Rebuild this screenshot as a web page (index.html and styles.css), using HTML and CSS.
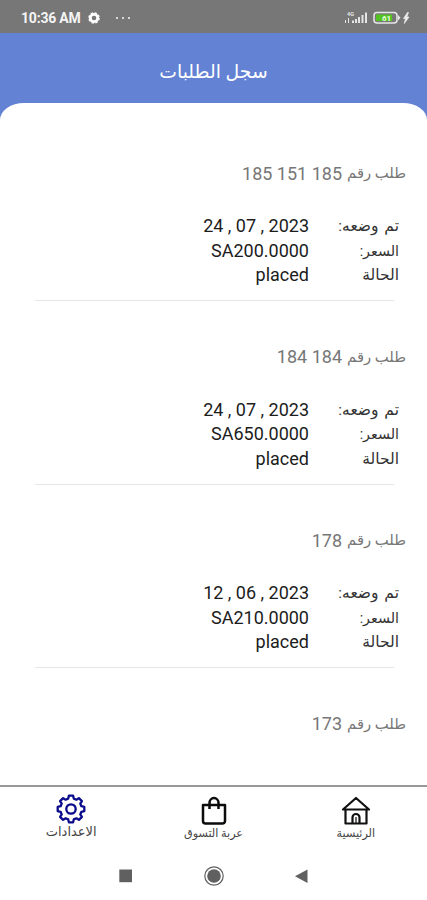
FILE: index.html
```html
<!DOCTYPE html>
<html lang="ar" dir="rtl">
<head>
<meta charset="utf-8">
<title>سجل الطلبات</title>
<link rel="stylesheet" href="styles.css">
</head>
<body>
<div class="status" dir="ltr">
  <span class="clock">10:36 AM</span>
  <svg class="status-gear" viewBox="0 0 12 12"><circle cx="6" cy="6" r="3.7" fill="none" stroke="#fff" stroke-width="2.8"/><circle cx="6" cy="6" r="5.1" fill="none" stroke="#fff" stroke-width="1.4" stroke-dasharray="2.4 1.6"/></svg>
  <svg class="dots" viewBox="0 0 16 4" fill="#eee"><circle cx="2" cy="2" r="1.100"/><circle cx="8" cy="2" r="1.100"/><circle cx="14" cy="2" r="1.100"/></svg>
  <svg class="indicators" viewBox="0 0 68 16">
    <text x="2" y="6" class="net">4G</text>
    <g fill="#e5e5e5"><path d="M0 10h1v3H0zM3 8h1v5H3zM7 10.500h2V13H7zM10 9h2v4h-2zM13 7h2v6h-2zM16.500 5h2v8h-2zM20 2.500h2V13h-2z"/></g>
    <rect x="29" y="2.500" width="23" height="10.500" rx="3" fill="#777" stroke="#e8e8e8" stroke-width="1.500"/>
    <path d="M53 5l2.500 2.700L53 10.500z" fill="#e8e8e8"/>
    <rect x="31" y="4.500" width="16" height="6.500" fill="#55c322"/>
    <text x="37" y="10.800" class="charge">61</text>
    <path d="M62.500 2.500l-4 6h2l-1.200 5 4.700-6.500h-2.200l1.700-4.500z" fill="#eee" stroke="#eee" stroke-width=".7"/>
  </svg>
</div>
<header><h1>سجل الطلبات</h1></header>
<main>
  <section class="order">
    <h2><span>طلب رقم</span> <b>185 151 185</b></h2>
    <dl>
      <dt>تم وضعه:</dt><dd>24 , 07 , 2023</dd>
      <dt class="price">السعر:</dt><dd>SA200.0000</dd>
      <dt>الحالة</dt><dd>placed</dd>
    </dl>
  </section>
  <section class="order">
    <h2><span>طلب رقم</span> <b>184 184</b></h2>
    <dl>
      <dt>تم وضعه:</dt><dd>24 , 07 , 2023</dd>
      <dt class="price">السعر:</dt><dd>SA650.0000</dd>
      <dt>الحالة</dt><dd>placed</dd>
    </dl>
  </section>
  <section class="order">
    <h2><span>طلب رقم</span> <b>178</b></h2>
    <dl>
      <dt>تم وضعه:</dt><dd>12 , 06 , 2023</dd>
      <dt class="price">السعر:</dt><dd>SA210.0000</dd>
      <dt>الحالة</dt><dd>placed</dd>
    </dl>
  </section>
  <section class="order">
    <h2><span>طلب رقم</span> <b>173</b></h2>
  </section>
</main>
<nav class="tabs">
  <a class="tab">
    <svg viewBox="0 0 30 30" fill="none" stroke="#111" stroke-width="2.200" stroke-linejoin="round"><path d="M2 13.500L15 2l13 11.500zM4.500 14v13.500h21V14M11.500 27v-5.500a3.500 3.500 0 0 1 7 0V27"/><path d="M15 21v6" stroke-width="1.200"/></svg>
    <span>الرئيسية</span>
  </a>
  <a class="tab">
    <svg viewBox="0 0 30 30" fill="none" stroke="#0b0b0b" stroke-width="2.500" stroke-linejoin="round"><path d="M4 9h22v16a2.500 2.500 0 0 1-2.500 2.500h-17A2.500 2.500 0 0 1 4 25zM10.500 13V7a4.500 5 0 0 1 9 0v6"/></svg>
    <span>عربة التسوق</span>
  </a>
  <a class="tab tab-active">
    <svg viewBox="-15 -15 30 30" fill="none" stroke="#0a0a8c" stroke-width="2.300" stroke-linejoin="round"><path d="M-2.800-10.400L-2.100-13.300H2.100L2.800-10.400 5.400-9.300 7.900-10.900 10.900-7.900 9.300-5.400 10.400-2.800 13.300-2.100V2.100L10.400 2.800 9.300 5.400 10.900 7.900 7.900 10.900 5.400 9.300 2.800 10.400 2.100 13.300H-2.100L-2.800 10.400-5.400 9.300-7.900 10.900-10.900 7.900-9.300 5.400-10.400 2.800-13.300 2.100V-2.100L-10.400-2.800-9.300-5.400-10.900-7.900-7.900-10.900-5.400-9.300z"/><circle r="4.700"/></svg>
    <span>الاعدادات</span>
  </a>
</nav>
<div class="system" dir="ltr">
  <svg viewBox="0 0 20 20"><path d="M3.300 3.500h12.700v12.700H3.300z" fill="#606060"/></svg>
  <svg viewBox="0 0 20 20"><circle cx="10" cy="10" r="9.200" fill="none" stroke="#606060" stroke-width="1.200"/><circle cx="10" cy="10" r="6.800" fill="#606060"/></svg>
  <svg viewBox="0 0 20 20"><path d="M15.500 3.500v13.500L3 10.200z" fill="#606060"/></svg>
</div>
</body>
</html>
```
FILE: styles.css
```css
* { box-sizing: border-box; margin: 0; padding: 0; }
body {
  width: 427px; height: 900px; overflow: hidden;
  display: flex; flex-direction: column;
  background: #fff; font-family: Roboto, "DejaVu Sans", sans-serif;
}
.status { height: 33px; flex: none; display: flex; align-items: center; padding: 3px 14px 0 21px; background: #777; color: #f4f4f4; }
.clock { width: 60px; font-size: 14px; font-weight: 700; letter-spacing: -.2px; white-space: nowrap; }
.status-gear { width: 12px; height: 12px; margin-left: 7px; }
.dots { width: 16px; height: 4px; margin-left: 15px; }
.indicators { width: 68px; height: 16px; margin-left: auto; }
.net { font: 700 5.500px Roboto, sans-serif; fill: #e5e5e5; }
.charge { font: 700 8px Roboto, sans-serif; fill: #e8ffe0; }
header { height: 94px; flex: none; background: #6382d4; padding-top: 23px; text-align: center; color: #fff; }
h1 { font-size: 18.800px; font-weight: 400; line-height: 32px; }
main { height: 682px; flex: none; margin-top: -24px; background: #fff; border-radius: 24px 24px 0 0 / 17px 17px 0 0; overflow: hidden; padding-top: 55px; }
.order { height: 183.600px; padding: 0 21px; }
h2 { display: flex; align-items: center; gap: 5px; height: 30px; font-weight: 400; color: #777; }
h2 span { font-size: 14.800px; }
h2 b { font-size: 18px; font-weight: 400; }
dl { display: grid; grid-template-columns: 85px 1fr; grid-auto-rows: 24.400px; align-items: center; width: 359px; height: 87px; margin: 26px 12px 0 0; border-bottom: 1px solid #e6e6e6; }
dt { margin-right: -5px; font-size: 15.500px; line-height: 24px; word-spacing: 2px; color: #333; white-space: nowrap; }
dt.price { font-size: 14.300px; }
dd { font-size: 18px; line-height: 24px; color: #1c1c1c; direction: ltr; text-align: right; }
.tabs { height: 66px; flex: none; border-top: 2px solid #999; display: grid; grid-template-columns: repeat(3, 1fr); padding-top: 9px; }
.tab { display: flex; flex-direction: column; align-items: center; font-size: 11.200px; line-height: 15px; color: #444; }
.tab svg { width: 30px; height: 30px; }
.tab-active { font-size: 13px; margin-top: -2px; }
.system { height: 49px; display: flex; justify-content: center; align-items: center; gap: 68px; }
.system svg { width: 20px; height: 20px; }
```
